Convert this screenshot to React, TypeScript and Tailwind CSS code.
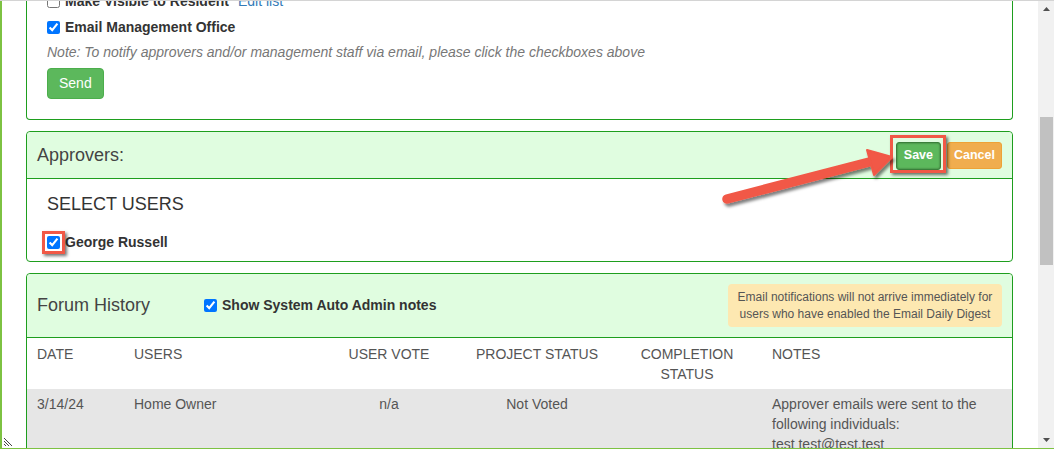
import { ReactNode } from "react";

// Approvers panel of a forum item, scrolled mid-page, with the screenshot's
// red call-out (box + arrow) pointing at the Save button.

type HistoryRow = {
  date: string;
  user: string;
  vote: string;
  project: string;
  completion: string;
  notes: string[];
};

const HISTORY: HistoryRow[] = [
  {
    date: "3/14/24",
    user: "Home Owner",
    vote: "n/a",
    project: "Not Voted",
    completion: "",
    notes: ["Approver emails were sent to the", "following individuals:", "test test@test.test"],
  },
];

const COLS = "grid grid-cols-[97px_205px_120px_176px_124px_1fr]";

function Check({ checked }: { checked?: boolean }) {
  return <input type="checkbox" defaultChecked={checked} className="w-[13px] h-[13px] shrink-0" />;
}

function Panel({ children, className = "" }: { children: ReactNode; className?: string }) {
  return <div className={`border border-[#1e9e1e] rounded bg-white ${className}`}>{children}</div>;
}

function Scrollbar() {
  return (
    <div className="w-4 shrink-0 bg-[#f1f1f1] flex flex-col">
      <div className="h-4 flex items-center justify-center">
        <svg width="7" height="4" viewBox="0 0 7 4"><polygon points="3.5,0 7,4 0,4" fill="#505050" /></svg>
      </div>
      <div className="mt-[100px] h-[148px] ml-[2px] mr-[1px] bg-[#c1c1c1]" />
      <div className="flex-1" />
      <div className="h-4 flex items-center justify-center">
        <svg width="7" height="4" viewBox="0 0 7 4"><polygon points="0,0 7,0 3.5,4" fill="#505050" /></svg>
      </div>
    </div>
  );
}

export default function App() {
  return (
    <div className="w-[1054px] h-[449px] overflow-hidden bg-white flex flex-col font-['Liberation_Sans',Arial,sans-serif] text-[14px] text-[#333]">
      <div className="h-px bg-[#d4d4d4] shrink-0" />
      <div className="flex flex-1 min-h-0 border-b border-[#7dc242]">
        <div className="relative flex-1 overflow-hidden border-l-2 border-[#7dc242]">
          <div className="-mt-[10px] pl-6 pr-[25px]">
            {/* Notify block */}
            <div className="border-x border-b border-[#1e9e1e] rounded-b px-5 pb-5">
              <label className="flex items-center gap-[5px] h-5">
                <Check />
                <span className="font-bold">Make Visible to Resident</span>
                <span className="ml-[4px] text-[#337ab7]">Edit list</span>
              </label>
              <label className="flex items-center gap-[5px] h-5 mt-[6px]">
                <Check checked />
                <span className="font-bold">Email Management Office</span>
              </label>
              <p className="mt-[5px] leading-5 italic text-[#777]">
                Note: To notify approvers and/or management staff via email, please click the checkboxes above
              </p>
              <button className="mt-[6px] h-[31px] px-[11px] rounded bg-[#5cb85c] border border-[#4cae4c] text-white">
                Send
              </button>
            </div>

            {/* Approvers */}
            <Panel className="mt-[11px]">
              <div className="h-[47px] bg-[#e0fde0] border-b border-[#1e9e1e] rounded-t flex items-center pl-[10px] pr-[10px]">
                <span className="text-[18px] text-[#444]">Approvers:</span>
                <div className="ml-auto flex items-center gap-[6px] mt-[1px]">
                  <span className="relative">
                    <button className="h-[28px] px-[7px] rounded-[3px] bg-[#5cb85c] border border-[#3a7f3a] shadow-[inset_0_0_2px_rgba(0,0,0,0.5)] text-white font-bold text-[12.5px]">
                      Save
                    </button>
                    <span className="absolute -left-[6px] -right-[5px] -top-[7px] -bottom-[3px] border-[3px] border-[#f15846] shadow-[2px_2px_3px_rgba(0,0,0,0.55)]" />
                  </span>
                  <button className="h-[27px] px-[6px] rounded-[3px] bg-[#f0ad4e] border border-[#eea236] text-white font-bold text-[12.5px]">
                    Cancel
                  </button>
                </div>
              </div>
              <div className="pl-5 pt-[15px] pb-[9px]">
                <div className="text-[18px] leading-5 text-[#333]">SELECT USERS</div>
                <label className="flex items-center gap-[5px] h-5 mt-[18px]">
                  <span className="relative flex">
                    <Check checked />
                    <span className="absolute -inset-[5px] border-[3px] border-[#f15846] shadow-[2px_2px_3px_rgba(0,0,0,0.55)]" />
                  </span>
                  <span className="font-bold">George Russell</span>
                </label>
              </div>
            </Panel>

            {/* Forum history */}
            <Panel className="mt-[11px]">
              <div className="h-[64px] bg-[#e0fde0] border-b border-[#1e9e1e] rounded-t flex items-center pl-[10px] pr-[10px]">
                <span className="w-[167px] text-[18px] text-[#444]">Forum History</span>
                <label className="flex items-center gap-[5px]">
                  <Check checked />
                  <span className="font-bold">Show System Auto Admin notes</span>
                </label>
                <div className="ml-auto w-[274px] h-[43px] rounded bg-[#fde8b1] text-[12px] leading-[17px] text-[#555] flex flex-col items-center justify-center">
                  <span>Email notifications will not arrive immediately for</span>
                  <span>users who have enabled the Email Daily Digest</span>
                </div>
              </div>
              <div className={`${COLS} pt-[6px] pb-[5px] leading-5 text-[#555]`}>
                <div className="pl-[10px]">DATE</div>
                <div className="pl-[10px]">USERS</div>
                <div className="text-center">USER VOTE</div>
                <div className="text-center">PROJECT STATUS</div>
                <div className="text-center px-[10px]">COMPLETION STATUS</div>
                <div className="pl-[23px]">NOTES</div>
              </div>
              {HISTORY.map((r) => (
                <div key={r.date + r.user} className={`${COLS} py-[5px] leading-5 bg-[#e6e6e6] text-[#555]`}>
                  <div className="pl-[10px]">{r.date}</div>
                  <div className="pl-[10px]">{r.user}</div>
                  <div className="text-center">{r.vote}</div>
                  <div className="text-center">{r.project}</div>
                  <div className="text-center">{r.completion}</div>
                  <div className="pl-[23px]">
                    {r.notes.map((n) => <div key={n}>{n}</div>)}
                  </div>
                </div>
              ))}
            </Panel>
          </div>

          {/* call-out arrow */}
          <svg className="absolute left-0 top-0 pointer-events-none" width="1036" height="447" viewBox="0 0 1036 447">
            <defs>
              <filter id="arrowShadow" x="-10%" y="-30%" width="120%" height="160%">
                <feDropShadow dx="2" dy="3" stdDeviation="1.6" floodColor="#000" floodOpacity="0.5" />
              </filter>
            </defs>
            <g filter="url(#arrowShadow)" fill="#f15846" stroke="#f15846">
              <line x1="725" y1="198" x2="871" y2="160" strokeWidth="9.5" strokeLinecap="round" />
              <polygon points="890,156 865,149 872,174" strokeWidth="2" strokeLinejoin="round" />
            </g>
          </svg>

          {/* resize grip */}
          <svg className="absolute left-[1px] bottom-[1px]" width="12" height="12" viewBox="0 0 12 12">
            <g stroke="#444" strokeWidth="1">
              <line x1="1" y1="3" x2="9" y2="11" />
              <line x1="1" y1="6" x2="6" y2="11" />
              <line x1="1" y1="9" x2="3" y2="11" />
            </g>
          </svg>
        </div>
        <Scrollbar />
      </div>
    </div>
  );
}
